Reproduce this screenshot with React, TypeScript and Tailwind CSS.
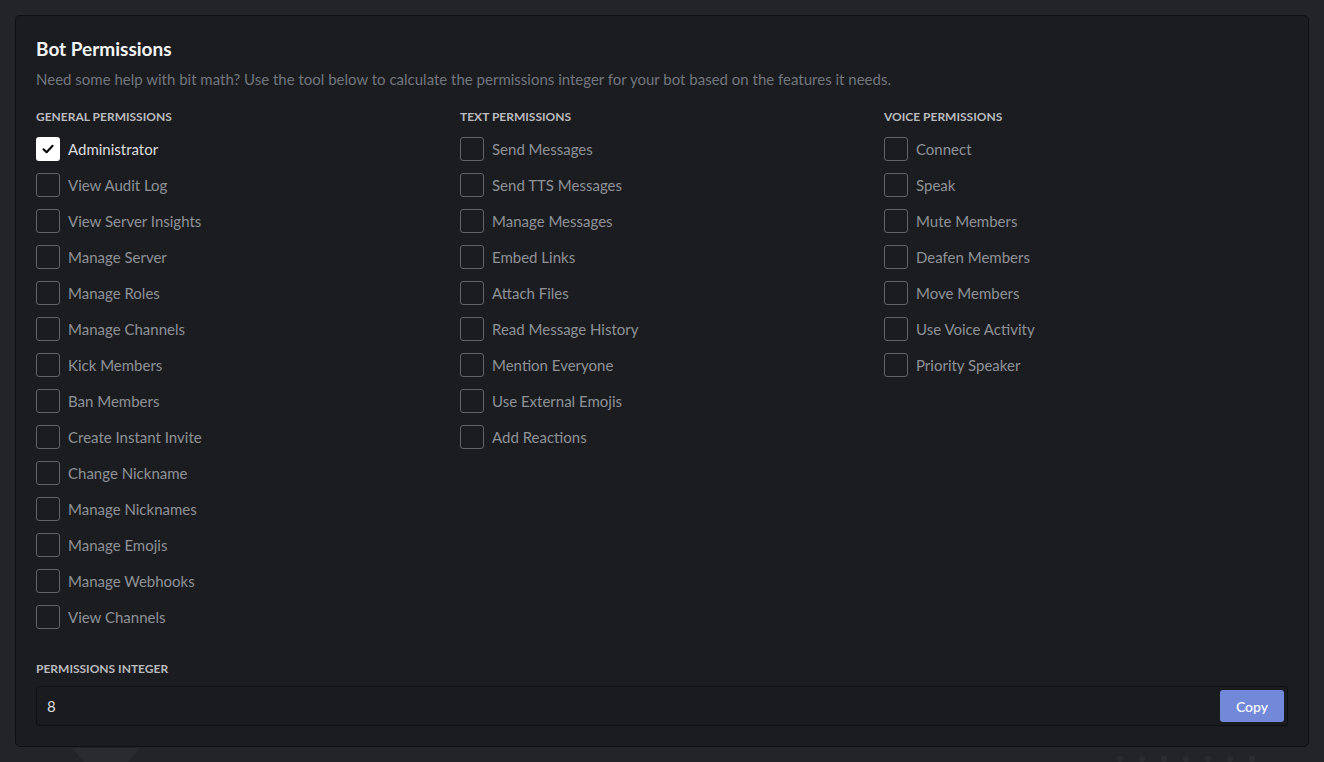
import React, { useState } from 'react'

const GENERAL = [
  'Administrator', 'View Audit Log', 'View Server Insights', 'Manage Server', 'Manage Roles',
  'Manage Channels', 'Kick Members', 'Ban Members', 'Create Instant Invite', 'Change Nickname',
  'Manage Nicknames', 'Manage Emojis', 'Manage Webhooks', 'View Channels',
]
const TEXT = [
  'Send Messages', 'Send TTS Messages', 'Manage Messages', 'Embed Links', 'Attach Files',
  'Read Message History', 'Mention Everyone', 'Use External Emojis', 'Add Reactions',
]
const VOICE = [
  'Connect', 'Speak', 'Mute Members', 'Deafen Members', 'Move Members', 'Use Voice Activity', 'Priority Speaker',
]

function Check({ label, checked, onToggle }: { label: string; checked: boolean; onToggle: () => void }) {
  return (
    <button onClick={onToggle} className="flex items-center gap-[8px] h-[24px] text-left">
      {checked ? (
        <span className="w-[24px] h-[24px] rounded-[3px] bg-white flex items-center justify-center">
          <svg width="14" height="14" viewBox="0 0 14 14" fill="none">
            <path d="M2.5 7.2 L5.6 10.2 L11.6 3.8" stroke="#000" strokeWidth="2" strokeLinecap="round" strokeLinejoin="round" />
          </svg>
        </span>
      ) : (
        <span className="w-[24px] h-[24px] rounded-[3px] border border-[#5f6268]" />
      )}
      <span className={`text-[15px] ${checked ? 'text-[#dcddde]' : 'text-[#8e9297]'}`}>{label}</span>
    </button>
  )
}

function Column({ title, items, value, onToggle }: { title: string; items: string[]; value: Record<string, boolean>; onToggle: (k: string) => void }) {
  return (
    <div>
      <h3 className="text-[12px] font-bold uppercase text-[#b9bbbe] leading-[14px] mb-[13px]">{title}</h3>
      <div className="flex flex-col gap-[12px]">
        {items.map(i => <Check key={i} label={i} checked={!!value[i]} onToggle={() => onToggle(i)} />)}
      </div>
    </div>
  )
}

export default function App() {
  const [value, setValue] = useState<Record<string, boolean>>({ Administrator: true })
  const toggle = (k: string) => setValue(v => ({ ...v, [k]: !v[k] }))

  return (
    <div className="h-[762px] overflow-hidden bg-[#232428] px-[15px] pt-[15px]" style={{ fontFamily: 'Lato, "Noto Sans", sans-serif' }}>
      <div className="rounded-[5px] border border-[#0e0f11] bg-[#1b1c1f] px-[20px] pt-[21px] pb-[20px]">
        <h2 className="text-[19px] font-bold text-[#f3f4f5] leading-[24px]">Bot Permissions</h2>
        <p className="mt-[8px] text-[15px] text-[#72767d] leading-[20px]">
          Need some help with bit math? Use the tool below to calculate the permissions integer for your bot based on the features it needs.
        </p>
        <div className="mt-[21px] grid grid-cols-[424px_424px_1fr]">
          <Column title="General Permissions" items={GENERAL} value={value} onToggle={toggle} />
          <Column title="Text Permissions" items={TEXT} value={value} onToggle={toggle} />
          <Column title="Voice Permissions" items={VOICE} value={value} onToggle={toggle} />
        </div>
        <h3 className="mt-[33px] text-[12px] font-bold uppercase text-[#b9bbbe] leading-[14px]">Permissions Integer</h3>
        <div className="mt-[10px] h-[40px] rounded-[3px] border border-[#0e0f11] bg-[#1a1b1e] flex items-center pl-[10px] pr-[3px]">
          <span className="flex-1 text-[15px] text-[#dcddde]">8</span>
          <button className="h-[32px] px-[16px] rounded-[3px] bg-[#7289da] text-white text-[14px] font-medium">Copy</button>
        </div>
      </div>
      <div className="flex items-start justify-between">
        <div className="ml-[57px] mt-[1px] w-[68px] h-[20px] bg-[#2a2b2e]" style={{ clipPath: 'polygon(0 0, 100% 0, 75% 100%, 25% 100%)' }} />
        <div className="mr-[54px] mt-[9px] flex gap-[16px]">
          {Array.from({ length: 7 }).map((_, i) => (
            <span key={i} className="w-[6px] h-[6px] rounded-full bg-[#2b2c30]" />
          ))}
        </div>
      </div>
    </div>
  )
}
